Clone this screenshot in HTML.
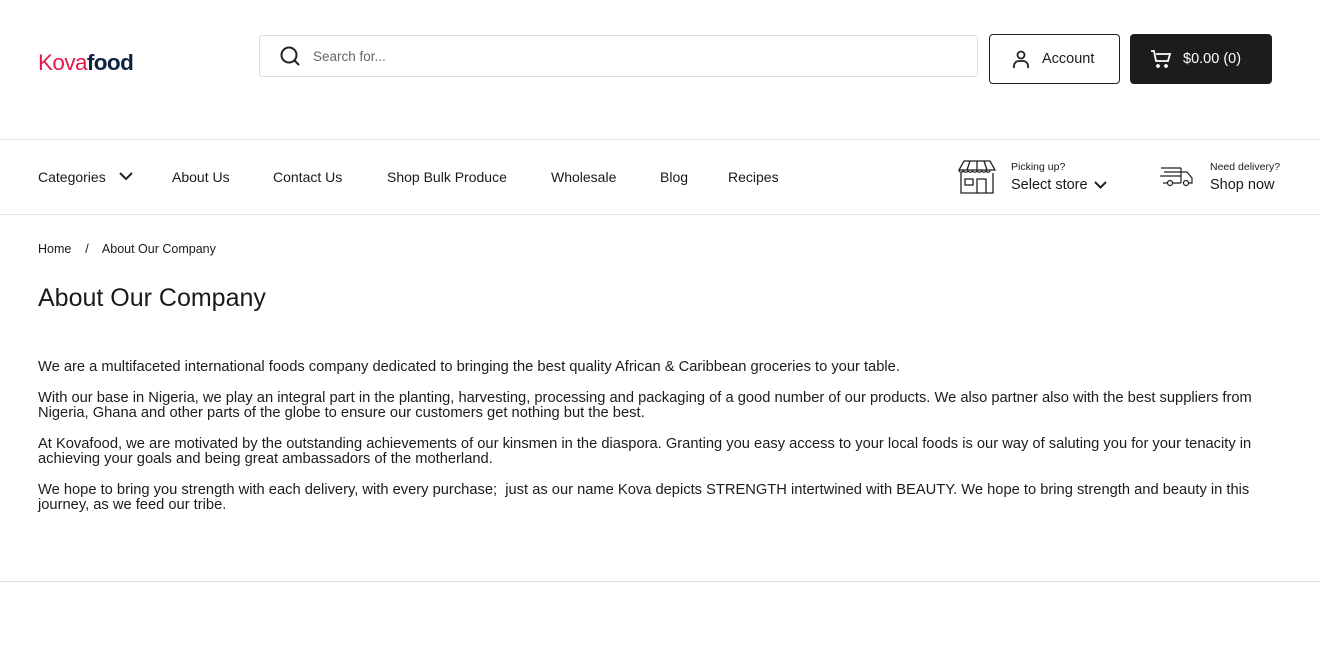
<!DOCTYPE html>
<html><head><meta charset="utf-8"><style>
*{box-sizing:border-box;margin:0;padding:0}
body{width:1320px;height:664px;overflow:hidden;background:#fff;font-family:"Liberation Sans",sans-serif;color:#1a1a1a;position:relative}
.a{position:absolute;white-space:nowrap}
.nav{font-size:14px;top:169px}
p{position:absolute;left:38px;width:1245px;font-size:14.7px;line-height:15px;color:#1c1c1c}
</style></head><body>
<div class="a" style="left:38px;top:50px;font-size:22.5px;letter-spacing:-0.6px"><span style="color:#e8194a">Kova</span><b style="color:#0d2340">food</b></div>
<div class="a" style="left:259px;top:35px;width:719px;height:42px;border:1px solid #ddd;border-radius:3px"></div>
<svg class="a" style="left:279px;top:45px" width="22" height="22" viewBox="0 0 22 22" fill="none" stroke="#222" stroke-width="2"><circle cx="10" cy="10" r="7.5"/><path d="M15.5 15.5L20 20"/></svg>
<div class="a" style="left:313px;top:49px;font-size:13.5px;color:#666">Search for...</div>
<div class="a" style="left:989px;top:34px;width:131px;height:50px;border:1px solid #222;border-radius:4px"></div>
<svg class="a" style="left:1011px;top:49px" width="20" height="20" viewBox="0 0 20 20" fill="none" stroke="#222" stroke-width="1.8"><circle cx="10" cy="6" r="3.5"/><path d="M3 19v-2a5 5 0 0 1 5-5h4a5 5 0 0 1 5 5v2"/></svg>
<div class="a" style="left:1042px;top:51px;font-size:14.5px">Account</div>
<div class="a" style="left:1130px;top:34px;width:142px;height:50px;background:#1c1c1c;border-radius:4px"></div>
<svg class="a" style="left:1150px;top:48px" width="22" height="22" viewBox="0 0 22 22" fill="none" stroke="#fff" stroke-width="1.8"><path d="M1 3h3l2 10h12l2-7H6"/><circle cx="8" cy="18" r="1" fill="#fff"/><circle cx="16" cy="18" r="1" fill="#fff"/></svg>
<div class="a" style="left:1183px;top:51px;font-size:14.5px;color:#fff">$0.00 (0)</div>
<div class="a" style="left:0;top:139px;width:1320px;border-top:1px solid #e3e3e3"></div>
<div class="a" style="left:0;top:214px;width:1320px;border-top:1px solid #e3e3e3"></div>
<div class="a nav" style="left:38px">Categories</div>
<svg class="a" style="left:119px;top:171px" width="14" height="10" viewBox="0 0 14 10" fill="none" stroke="#222" stroke-width="2"><path d="M1 2l6 6 6-6"/></svg>
<div class="a nav" style="left:172px">About Us</div>
<div class="a nav" style="left:273px">Contact Us</div>
<div class="a nav" style="left:387px">Shop Bulk Produce</div>
<div class="a nav" style="left:551px">Wholesale</div>
<div class="a nav" style="left:660px">Blog</div>
<div class="a nav" style="left:728px">Recipes</div>
<svg class="a" style="left:958px;top:160px" width="38" height="34" viewBox="0 0 38 34" fill="none" stroke="#222" stroke-width="1.3"><path d="M6 1h26l5 9H1z"/><path d="M1 10c0 3 4 3 4.5 0c0 3 4.5 3 4.5 0c0 3 4.5 3 4.5 0c0 3 4.5 3 4.5 0c0 3 4.5 3 4.5 0c0 3 4.5 3 4.5 0c0 3 4 3 4 0"/><path d="M12 1l-3 9M19 1v9M26 1l3 9"/><path d="M3 13v20h32V13"/><rect x="7" y="19" width="8" height="6"/><path d="M19 33V19h9v14"/></svg>
<div class="a" style="left:1011px;top:161px;font-size:10.5px">Picking up?</div>
<div class="a" style="left:1011px;top:177px;font-size:14.5px">Select store</div>
<svg class="a" style="left:1094px;top:181px" width="13" height="9" viewBox="0 0 13 9" fill="none" stroke="#222" stroke-width="2"><path d="M1 1l5.5 5.5L12 1"/></svg>
<svg class="a" style="left:1159px;top:164px" width="35" height="26" viewBox="0 0 35 26" fill="none" stroke="#222" stroke-width="1.2"><path d="M2 4h20M5 8h17M1 12h21M22 4v15M22 8h6l5 6v5h-3M8 19H4M14 19h8"/><circle cx="11" cy="19" r="2.5"/><circle cx="27" cy="19" r="2.5"/></svg>
<div class="a" style="left:1210px;top:161px;font-size:10.5px">Need delivery?</div>
<div class="a" style="left:1210px;top:177px;font-size:14.5px">Shop now</div>
<div class="a" style="left:38px;top:242px;font-size:12.5px">Home &nbsp;&nbsp;&nbsp;/&nbsp;&nbsp;&nbsp; About Our Company</div>
<div class="a" style="left:38px;top:284px;font-size:25px">About Our Company</div>
<p style="top:360px">We are a multifaceted international foods company dedicated to bringing the best quality African &amp; Caribbean groceries to your table.</p>
<p style="top:391px">With our base in Nigeria, we play an integral part in the planting, harvesting, processing and packaging of a good number of our products. We also partner also with the best suppliers from Nigeria, Ghana and other parts of the globe to ensure our customers get nothing but the best.</p>
<p style="top:437px">At Kovafood, we are motivated by the outstanding achievements of our kinsmen in the diaspora. Granting you easy access to your local foods is our way of saluting you for your tenacity in achieving your goals and being great ambassadors of the motherland.</p>
<p style="top:483px">We hope to bring you strength with each delivery, with every purchase;&nbsp; just as our name Kova depicts STRENGTH intertwined with BEAUTY. We hope to bring strength and beauty in this journey, as we feed our tribe.</p>
<div class="a" style="left:0;top:581px;width:1320px;border-top:1px solid #ddd"></div>
</body></html>
